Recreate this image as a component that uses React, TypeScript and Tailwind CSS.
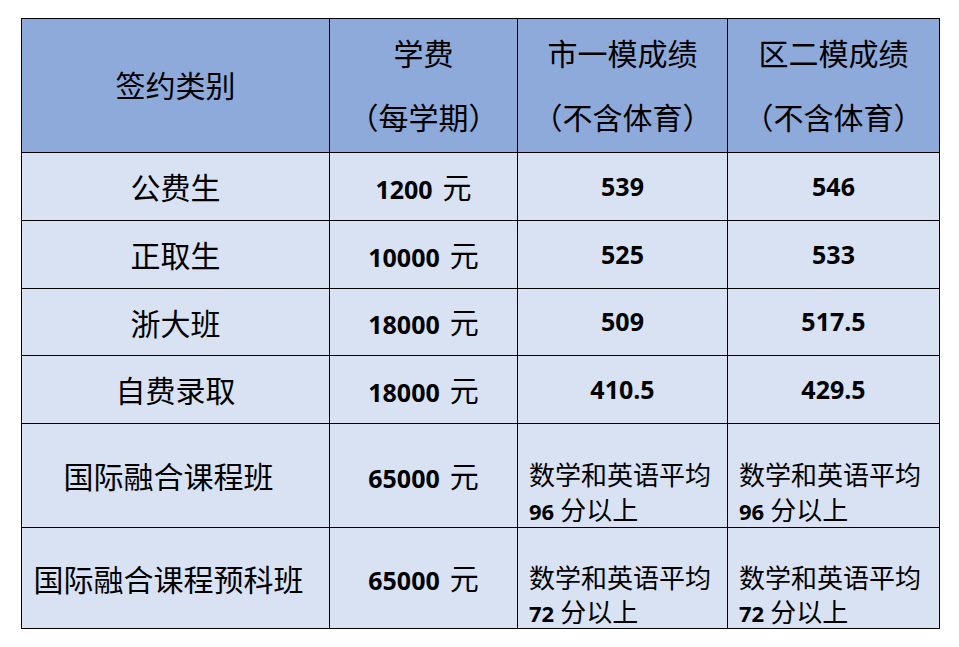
const cjk = "font-['Noto_Sans_CJK_SC',sans-serif]"
const num = "font-['Open_Sans','Noto_Sans_CJK_SC',sans-serif] font-bold"

const rows = [
  { name: '公费生', fee: '1200', a: '539', b: '546' },
  { name: '正取生', fee: '10000', a: '525', b: '533' },
  { name: '浙大班', fee: '18000', a: '509', b: '517.5' },
  { name: '自费录取', fee: '18000', a: '410.5', b: '429.5' },
]

const heights = ['h-[68px]', 'h-[68px]', 'h-[67px]', 'h-[68px]']

function Fee({ value }: { value: string }) {
  return (
    <span className="whitespace-nowrap">
      <span className={`${num} text-[25px]`}>{value}</span>
      <span className={`${cjk} ml-[10px] text-[29px]`}>元</span>
    </span>
  )
}

function Avg({ score, tight }: { score: string; tight?: boolean }) {
  const line = tight ? 'h-[34px] leading-[34px]' : 'h-[35px] leading-[35px]'
  return (
    <div className="pt-[32px] pl-[11px] text-left">
      <div className={`${cjk} ${line} overflow-visible text-[26px]`}>数学和英语平均</div>
      <div className={`${line} overflow-visible`}>
        <span className={`${num} text-[22px]`}>{score}</span>
        <span className={`${cjk} ml-[6px] text-[26px]`}>分以上</span>
      </div>
    </div>
  )
}

export default function App() {
  const cell = 'border border-black p-0'
  const head = `${cell} ${cjk} pb-[4px] text-center align-middle text-[30px] font-normal leading-[64px]`
  return (
    <div className="min-h-screen bg-white pt-[18px] pl-[21px] text-black">
      <table className="w-[918px] table-fixed border-collapse">
        <colgroup>
          <col className="w-[308px]" />
          <col className="w-[188px]" />
          <col className="w-[210px]" />
          <col className="w-[212px]" />
        </colgroup>
        <thead>
          <tr className="h-[134px] bg-[#8eaadb]">
            <th className={head}>签约类别</th>
            <th className={head}>
              <div>学费</div>
              <div>（每学期）</div>
            </th>
            <th className={head}>
              <div>市一模成绩</div>
              <div>（不含体育）</div>
            </th>
            <th className={head}>
              <div>区二模成绩</div>
              <div>（不含体育）</div>
            </th>
          </tr>
        </thead>
        <tbody className="bg-[#d9e2f3]">
          {rows.map((r, i) => (
            <tr key={r.name} className={heights[i]}>
              <td className={`${cell} ${cjk} text-center align-middle text-[30px]`}>{r.name}</td>
              <td className={`${cell} text-center align-middle`}>
                <Fee value={r.fee} />
              </td>
              <td className={`${cell} ${num} text-center align-middle text-[25px]`}>{r.a}</td>
              <td className={`${cell} ${num} text-center align-middle text-[25px]`}>{r.b}</td>
            </tr>
          ))}
          <tr className="h-[104px]">
            <td className={`${cell} ${cjk} pr-[14px] text-center align-middle text-[30px]`}>国际融合课程班</td>
            <td className={`${cell} text-center align-middle`}>
              <Fee value="65000" />
            </td>
            <td className={`${cell} align-top`}>
              <Avg score="96" />
            </td>
            <td className={`${cell} align-top`}>
              <Avg score="96" />
            </td>
          </tr>
          <tr className="h-[101px]">
            <td className={`${cell} ${cjk} pr-[14px] text-center align-middle text-[30px]`}>国际融合课程预科班</td>
            <td className={`${cell} text-center align-middle`}>
              <Fee value="65000" />
            </td>
            <td className={`${cell} align-top`}>
              <Avg score="72" tight />
            </td>
            <td className={`${cell} align-top`}>
              <Avg score="72" tight />
            </td>
          </tr>
        </tbody>
      </table>
    </div>
  )
}
